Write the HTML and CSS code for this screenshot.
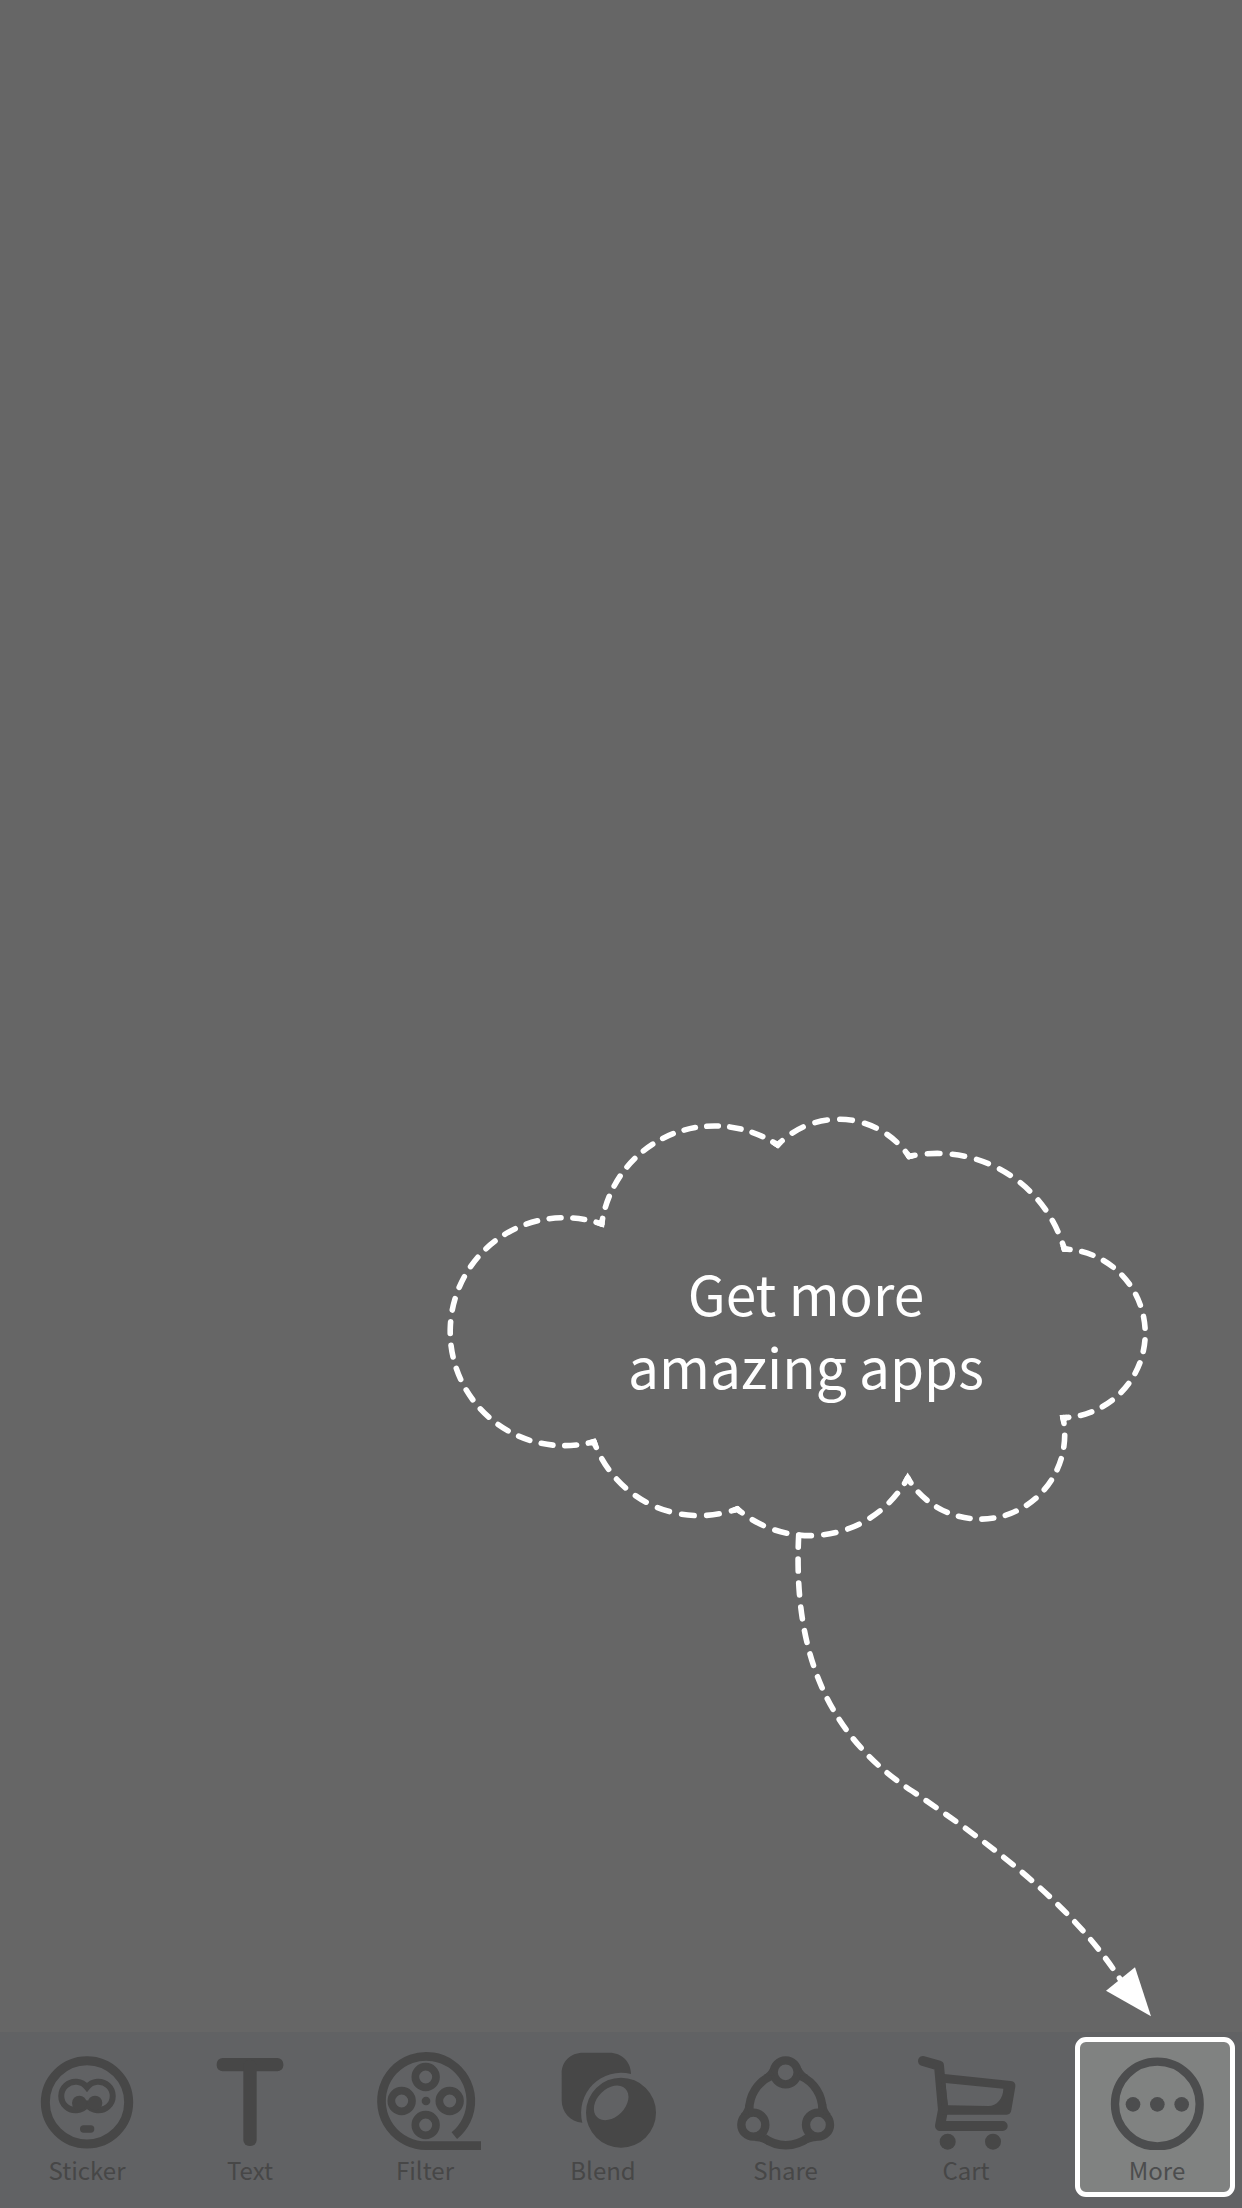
FILE: index.html
```html
<!DOCTYPE html>
<html lang="en">
<head>
<meta charset="utf-8">
<meta name="viewport" content="width=device-width, initial-scale=1">
<title>Get more amazing apps</title>
<link rel="stylesheet" href="styles.css">
</head>
<body>
<main class="stage">
  <section class="tip">
    <svg class="tip-art" viewBox="448 1114 704 906" aria-hidden="true">
      <g class="dashes" stroke-width="5.6">
        <path pathLength="240" d="M601.7 1224A114 114 0 0 1 777.7 1145"/>
        <path pathLength="144" d="M777.7 1145A85 85 0 0 1 909 1156.5"/>
        <path pathLength="192" d="M909 1156.5A132 132 0 0 1 1064.3 1249"/>
        <path pathLength="264" d="M1064.3 1249A84.4 84.4 0 0 1 1063 1417.7"/>
        <path pathLength="240" d="M1063 1417.7A84.5 84.5 0 0 1 907.7 1478"/>
        <path pathLength="192" d="M907.7 1478A112 112 0 0 1 737.3 1509"/>
        <path pathLength="168" d="M737.3 1509A112 112 0 0 1 594 1441.7"/>
        <path pathLength="432" d="M594 1441.7A114 114 0 1 1 601.7 1224"/>
      </g>
      <path class="corners" stroke-width="5.6" d="M597.9 1222.7L601.7 1224L602.2 1220M774.4 1142.8L777.7 1145L780.5 1142.1M906.8 1153.2L909 1156.5L912.9 1155.7M1063.2 1245.2L1064.3 1249L1068.3 1249.2M1067 1417.6L1063 1417.7L1063.8 1421.6M909.7 1481.4L907.7 1478L905.7 1481.5M740.3 1511.6L737.3 1509L733.5 1510.3M595.4 1445.5L594 1441.7L590.1 1442.7"/>
      <path class="trail" stroke-width="5.6" pathLength="577" d="M798.7 1535C793 1650 826 1735 912 1791C990 1844 1070 1902 1120 1979"/>
      <path class="head" d="M1135 1967.3L1106 1990.7L1151 2016.3Z"/>
    </svg>
    <p class="tip-text">Get more<br>amazing apps</p>
  </section>
</main>
<nav class="tabs">
  <button class="tab" type="button">
    <svg class="icon" viewBox="93 90 336 300" aria-hidden="true">
      <circle class="line" cx="261" cy="247" r="125" stroke-width="27"/>
      <path class="line" stroke-width="18" d="M261 202A43 43 0 1 0 261 254A43 43 0 1 0 261 202Z"/>
      <circle cx="238" cy="249" r="22"/><circle cx="285" cy="249" r="22"/>
      <rect x="240" y="316" width="43" height="22" rx="11"/>
    </svg>
    <span>Sticker</span>
  </button>
  <button class="tab" type="button">
    <svg class="icon" viewBox="582 90 336 300" aria-hidden="true">
      <rect x="650" y="114" width="200" height="40" rx="18"/>
      <rect x="730" y="120" width="40" height="258" rx="18"/>
    </svg>
    <span>Text</span>
  </button>
  <button class="tab" type="button">
    <svg class="icon" viewBox="147 90 336 300" aria-hidden="true">
      <path class="line" stroke-width="26" d="M403 347A134 134 0 1 0 318 377H483"/>
      <g class="line" stroke-width="23">
        <circle cx="317" cy="171" r="31"/><circle cx="317" cy="315" r="31"/>
        <circle cx="245" cy="243" r="31"/><circle cx="389" cy="243" r="31"/>
      </g>
      <circle cx="318" cy="243" r="13"/>
    </svg>
    <span>Filter</span>
  </button>
  <button class="tab" type="button">
    <svg class="icon" viewBox="681 90 336 300" aria-hidden="true">
      <path d="M787 308C750 305 725 277 725 240V160C725 125 750 98 790 98H868C905 98 933 125 933 162A120 120 0 0 0 787 308Z"/>
      <path fill-rule="evenodd" d="M798 278A105 105 0 1 1 1008 278A105 105 0 1 1 798 278ZM831 291A60 42 -45 0 1 916 206A60 42 -45 0 1 831 291Z"/>
    </svg>
    <span>Blend</span>
  </button>
  <button class="tab" type="button">
    <svg class="icon" viewBox="149 90 336 300" aria-hidden="true">
      <g class="line" stroke-width="25">
        <circle cx="316" cy="157" r="36"/><circle cx="219" cy="314" r="36"/><circle cx="413" cy="314" r="36"/>
        <path d="M207 270A109 109 0 0 1 272 168M361 168A109 109 0 0 1 426 270M250 353A109 109 0 0 0 383 353"/>
      </g>
      <path d="M250 165Q264 158 270 144L282 168ZM383 165Q369 158 363 144L351 168ZM195 250Q196 268 181 283L207 285ZM438 250Q437 268 452 283L426 285ZM221 363Q240 362 260 374L255 345ZM412 363Q393 362 373 374L378 345Z"/>
    </svg>
    <span>Share</span>
  </button>
  <button class="tab" type="button">
    <svg class="icon" viewBox="690 90 336 300" aria-hidden="true">
      <path class="line round" stroke-width="30" d="M729 123L777 137L789 270L780 318H968"/>
      <path fill-rule="evenodd" d="M785 161L992 183Q1008 185 1006 200L994 270Q992 284 980 284H785ZM796 189L804 256L925 258C950 258 970 235 970 206Z"/>
      <circle cx="803" cy="365" r="24"/><circle cx="939" cy="365" r="24"/>
    </svg>
    <span>Cart</span>
  </button>
  <button class="tab tab-active" type="button">
    <svg class="icon" viewBox="184 330 336 300" aria-hidden="true">
      <circle class="line" cx="353" cy="492" r="127" stroke-width="25"/>
      <circle cx="280" cy="493" r="22"/><circle cx="353" cy="493" r="22"/><circle cx="426" cy="493" r="22"/>
    </svg>
    <span>More</span>
  </button>
</nav>
</body>
</html>
```
FILE: styles.css
```css
* {
  box-sizing: border-box;
}

body {
  display: flex;
  flex-direction: column;
  min-height: 100vh;
  margin: 0;
  background: #666666;
  font-family: "Noto Sans CJK SC", "Noto Sans", sans-serif;
}

.stage {
  flex: 1;
  display: flex;
  justify-content: flex-end;
  align-items: flex-end;
  padding: 12px 90px 12px 12px;
}

/* The artwork and its caption share one grid cell */
.tip {
  display: grid;
  width: 100%;
  max-width: 704px;
  color: #ffffff;
}

.tip-art,
.tip-text {
  grid-area: 1 / 1;
}

.tip-art {
  display: block;
  width: 100%;
  overflow: visible;
}

.tip-text {
  margin: 0;
  padding: 142px 0 0 12px;
  font-size: 55px;
  line-height: 73px;
  text-align: center;
}

.dashes,
.trail,
.corners {
  fill: none;
  stroke: currentColor;
}

.dashes,
.trail {
  stroke-linecap: round;
  stroke-dasharray: 12 12;
}

.dashes {
  stroke-dashoffset: 6;
}

.head {
  fill: currentColor;
}

.tabs {
  display: grid;
  grid-template-columns: 166fr 160fr 190fr 166fr 199fr 162fr 188fr;
  min-height: 176px;
  padding: 0 7px 0 4px;
  background: #616264;
}

.tab {
  display: flex;
  flex-direction: column;
  align-items: center;
  gap: 2px;
  min-width: 0;
  padding: 18px 0 0;
  border: 0;
  background: none;
  color: #474747;
  font-family: inherit;
  font-size: 24px;
  line-height: 36px;
  cursor: pointer;
}

.tab-active {
  justify-self: end;
  width: 100%;
  max-width: 160px;
  height: 160px;
  margin-top: 5px;
  padding: 8px 0 0 4px;
  border: 5px solid #ffffff;
  border-radius: 11px;
  background: #808281;
  color: #4c4d4e;
}

.icon {
  width: 112px;
  max-width: 100%;
  height: 100px;
  fill: currentColor;
}

.line {
  fill: none;
  stroke: currentColor;
}

.round {
  stroke-linecap: round;
  stroke-linejoin: round;
}
```
